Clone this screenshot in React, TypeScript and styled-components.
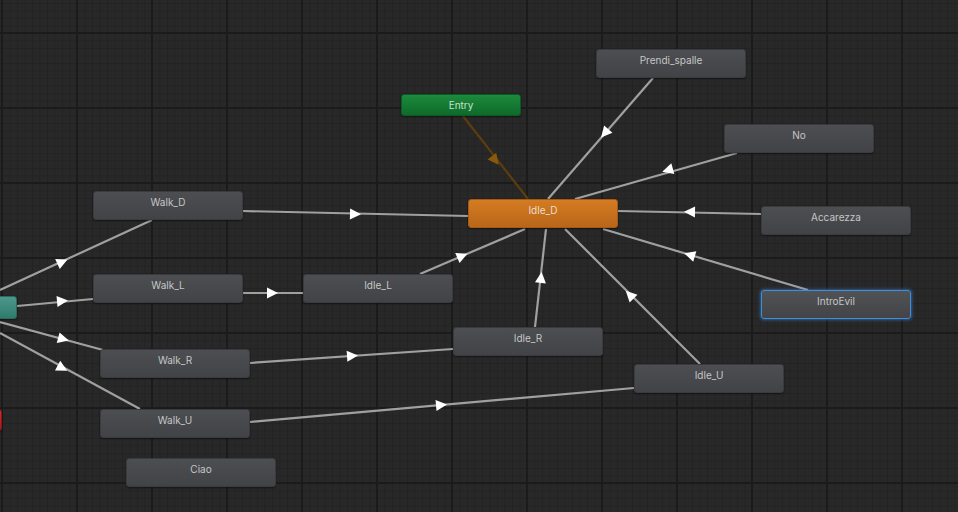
import React from 'react';
import styled, { createGlobalStyle, css } from 'styled-components';

type Variant = 'default' | 'default-state' | 'entry' | 'any' | 'exit' | 'selected';

interface StateNode {
  name: string;
  x: number;
  y: number;
  w?: number;
  h?: number;
  variant?: Variant;
}

interface Transition {
  from: [number, number];
  to: [number, number];
  arrow: [number, number];
  entry?: boolean;
}

const NODES: StateNode[] = [
  { name: 'Prendi_spalle', x: 596, y: 49 },
  { name: 'Entry', x: 401, y: 94, w: 120, h: 22, variant: 'entry' },
  { name: 'No', x: 724, y: 124 },
  { name: 'Walk_D', x: 93, y: 191 },
  { name: 'Idle_D', x: 468, y: 199, variant: 'default-state' },
  { name: 'Accarezza', x: 761, y: 206 },
  { name: 'Walk_L', x: 93, y: 274 },
  { name: 'Idle_L', x: 303, y: 274 },
  { name: 'IntroEvil', x: 761, y: 290, variant: 'selected' },
  { name: '', x: -133, y: 296, h: 23, variant: 'any' },
  { name: 'Idle_R', x: 453, y: 327 },
  { name: 'Walk_R', x: 100, y: 349 },
  { name: 'Idle_U', x: 634, y: 364 },
  { name: 'Walk_U', x: 100, y: 409 },
  { name: '', x: -148, y: 409, h: 22, variant: 'exit' },
  { name: 'Ciao', x: 126, y: 458 },
];

const TRANSITIONS: Transition[] = [
  { from: [463, 116], to: [528, 199], arrow: [495, 160], entry: true },
  { from: [653, 78], to: [548, 199], arrow: [605, 133] },
  { from: [737, 153], to: [575, 199], arrow: [668, 170] },
  { from: [761, 214], to: [618, 211], arrow: [690, 212] },
  { from: [808, 290], to: [603, 229], arrow: [690, 255] },
  { from: [700, 364], to: [565, 229], arrow: [630, 295] },
  { from: [535, 327], to: [546, 229], arrow: [541, 278] },
  { from: [420, 274], to: [525, 229], arrow: [462, 256] },
  { from: [243, 211], to: [468, 216], arrow: [355, 214] },
  { from: [243, 293], to: [303, 293], arrow: [272, 293] },
  { from: [250, 363], to: [453, 349], arrow: [352, 356] },
  { from: [250, 422], to: [634, 388], arrow: [441, 405] },
  { from: [0, 290], to: [152, 220], arrow: [62, 262] },
  { from: [17, 306], to: [93, 299], arrow: [62, 301] },
  { from: [0, 322], to: [103, 350], arrow: [63, 339] },
  { from: [0, 333], to: [140, 409], arrow: [62, 368] },
];

const GlobalStyle = createGlobalStyle`
  html, body {
    margin: 0;
    padding: 0;
    background: #282828;
    overflow: hidden;
  }
`;

const Canvas = styled.div`
  position: relative;
  width: 958px;
  height: 512px;
  overflow: hidden;
  background-color: #282828;
  background-image:
    linear-gradient(#1b1b1b 2px, transparent 2px),
    linear-gradient(90deg, #1b1b1b 2px, transparent 2px),
    linear-gradient(#232323 1px, transparent 1px),
    linear-gradient(90deg, #232323 1px, transparent 1px);
  background-size: 75px 75px, 75px 75px, 7.5px 7.5px, 7.5px 7.5px;
  background-position: 0 32px, 76px 0, 0 3px, 2px 0;
`;

const Wires = styled.svg`
  position: absolute;
  inset: 0;
  width: 958px;
  height: 512px;
`;

const variantStyles: Record<Variant, ReturnType<typeof css>> = {
  default: css`
    background: linear-gradient(#4c4e52, #414346);
    border: 1px solid #3a3b3e;
  `,
  'default-state': css`
    background: linear-gradient(#d47c22, #b9661a);
    border: 1px solid #a65a15;
    color: #eedccb;
  `,
  entry: css`
    background: linear-gradient(#1c8a3c, #0e6a2b);
    border: 1px solid #0c5a24;
    color: #c6e2cc;
  `,
  any: css`
    background: linear-gradient(#4c9a8c, #2f7a6d);
    border: 1px solid #2a6a5f;
  `,
  exit: css`
    background: linear-gradient(#c83030, #a01c1c);
    border: 1px solid #8a1818;
  `,
  selected: css`
    background: linear-gradient(#505256, #424447);
    border: 1px solid #3d8fdc;
    box-shadow: 0 0 3px 1px rgba(60, 140, 220, 0.55);
  `,
};

const Node = styled.div<{ $variant: Variant }>`
  position: absolute;
  box-sizing: border-box;
  border-radius: 3px;
  padding-top: 4px;
  font-family: Inter, 'Liberation Sans', sans-serif;
  font-size: 10px;
  line-height: 12px;
  text-align: center;
  color: #c6c6c6;
  box-shadow: 0 1px 2px rgba(0, 0, 0, 0.45);
  ${(p) => variantStyles[p.$variant]}
`;

const Arrow: React.FC<{ t: Transition }> = ({ t }) => {
  const dx = t.to[0] - t.from[0];
  const dy = t.to[1] - t.from[1];
  const angle = (Math.atan2(dy, dx) * 180) / Math.PI;
  const fill = t.entry ? '#8a5a0c' : '#ffffff';
  return (
    <polygon
      points="6,0 -5,-5.5 -5,5.5"
      fill={fill}
      transform={`translate(${t.arrow[0]} ${t.arrow[1]}) rotate(${angle})`}
    />
  );
};

const App: React.FC = () => {
  return (
    <>
      <GlobalStyle />
      <Canvas>
        <Wires viewBox="0 0 958 512">
          {TRANSITIONS.map((t, i) => (
            <line
              key={`l${i}`}
              x1={t.from[0]}
              y1={t.from[1]}
              x2={t.to[0]}
              y2={t.to[1]}
              stroke={t.entry ? '#5c3d0c' : '#a0a0a0'}
              strokeWidth={2.2}
            />
          ))}
          {TRANSITIONS.map((t, i) => (
            <Arrow key={`a${i}`} t={t} />
          ))}
        </Wires>
        {NODES.map((n, i) => (
          <Node
            key={i}
            $variant={n.variant ?? 'default'}
            style={{ left: n.x, top: n.y, width: n.w ?? 150, height: n.h ?? 29 }}
          >
            {n.name}
          </Node>
        ))}
      </Canvas>
    </>
  );
};

export default App;
